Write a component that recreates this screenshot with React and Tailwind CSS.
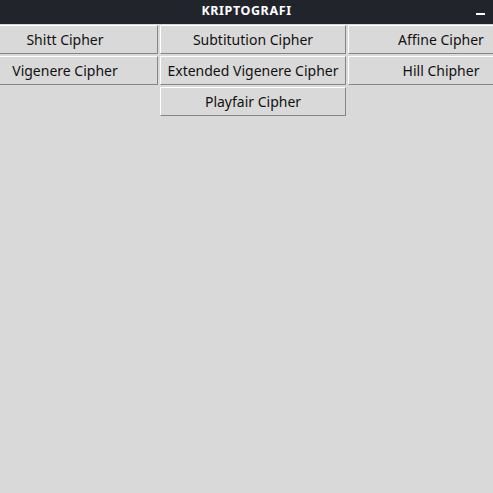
const ciphers = [
  'Shitt Cipher',
  'Subtitution Cipher',
  'Affine Cipher',
  'Vigenere Cipher',
  'Extended Vigenere Cipher',
  'Hill Chipher',
  null,
  'Playfair Cipher',
];

export default function App() {
  return (
    <div className="w-[493px] h-[493px] overflow-hidden bg-[#d9d9d9] font-['Noto_Sans',sans-serif]">
      <div className="relative h-[24px] pb-[2px] bg-[#22242c] flex items-center justify-center">
        <span className="text-[12.5px] font-bold tracking-[0.6px] text-white leading-none">KRIPTOGRAFI</span>
        <span className="absolute left-[476px] top-[13px] w-[9px] h-[2px] bg-white" />
      </div>
      <div className="ml-[-28px] mt-px grid grid-cols-[186px_186px_186px] auto-rows-[29px] gap-[2px]">
        {ciphers.map((name, i) =>
          name ? (
            <button
              key={i}
              className="bg-[#d9d9d9] border border-t-white border-l-white border-b-[#858585] border-r-[#858585] text-[14px] text-[#111] leading-none"
            >
              {name}
            </button>
          ) : (
            <div key={i} />
          )
        )}
      </div>
    </div>
  );
}
